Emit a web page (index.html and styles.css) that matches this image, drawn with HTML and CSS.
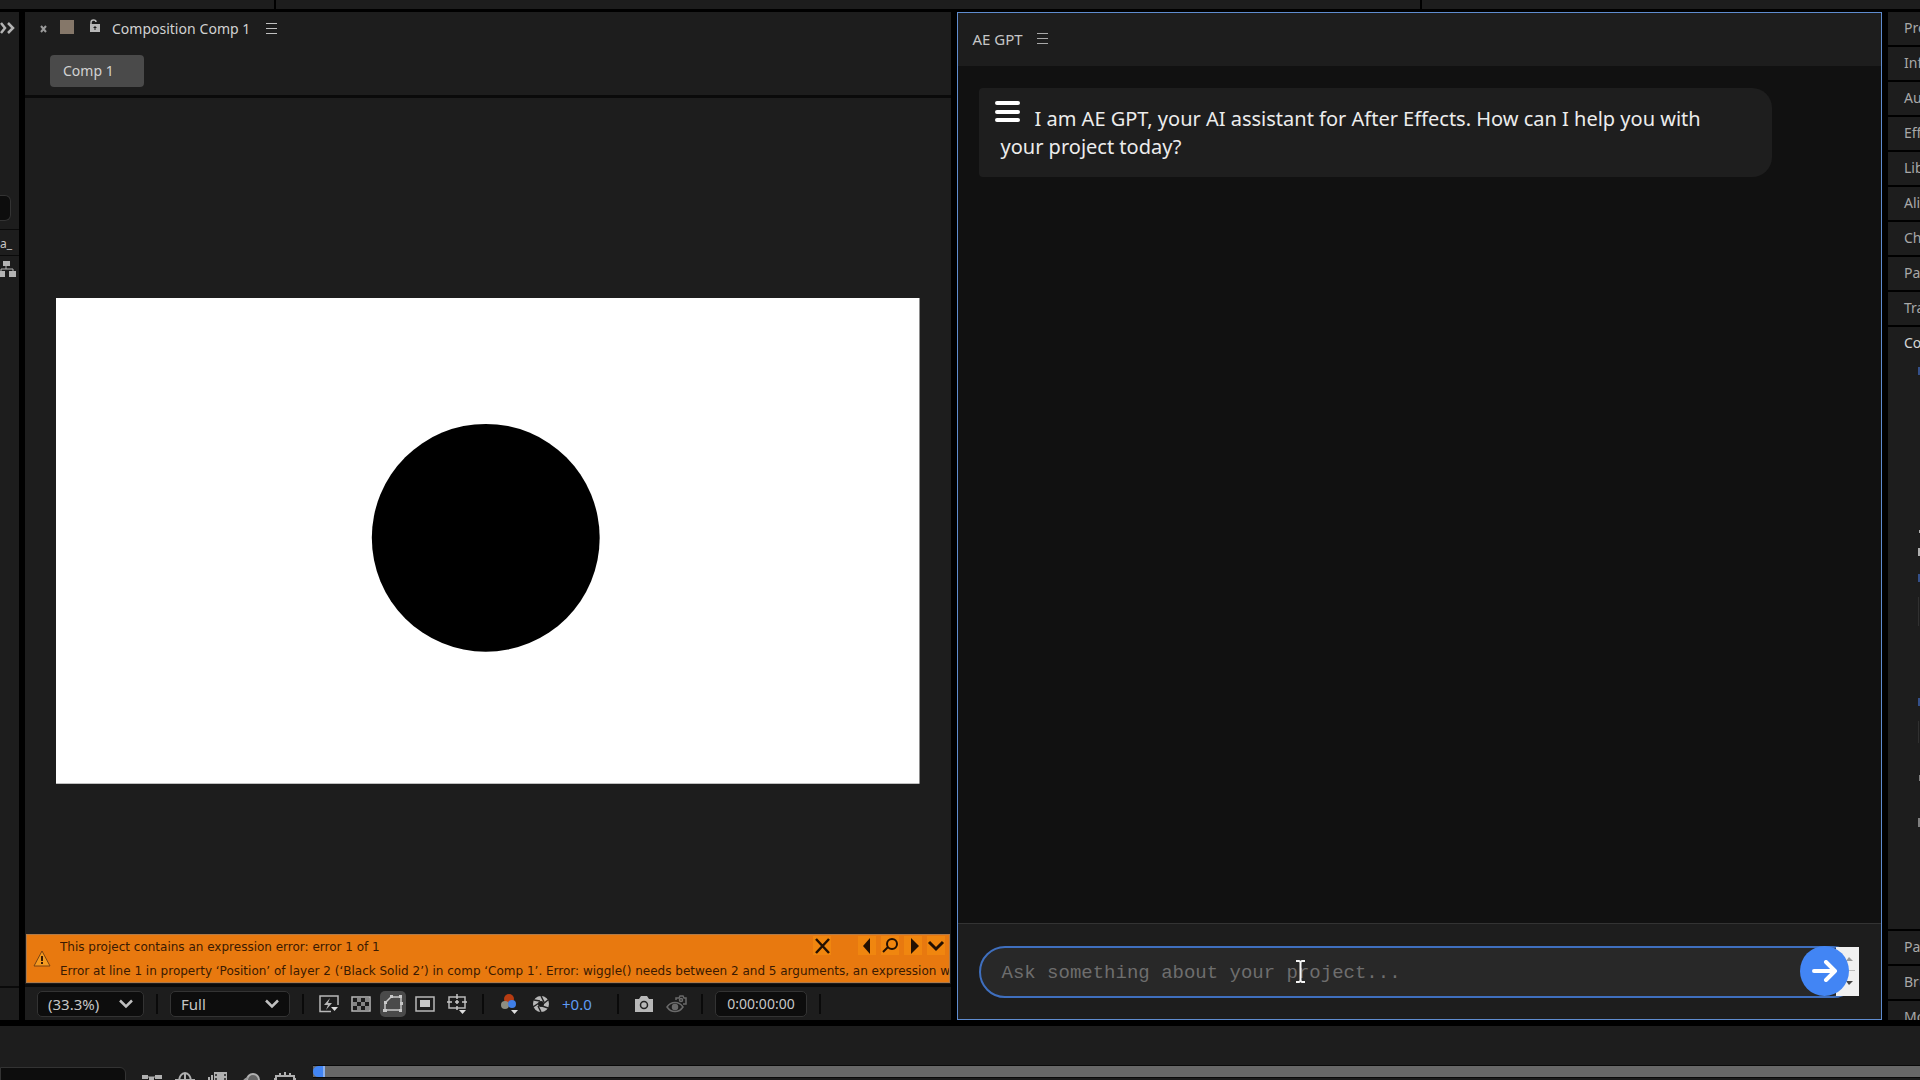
FILE: index.html
```html
<!DOCTYPE html>
<html lang="en">
<head>
<meta charset="utf-8">
<title>AE GPT</title>
<link rel="stylesheet" href="styles.css">
</head>
<body>
<div class="app">
  <header class="topbar"><span class="topbar-a"></span><span class="topbar-b"></span><span class="topbar-c"></span></header>

  <main class="workspace">
    <aside class="left">
      <button class="bare expand" aria-label="Expand panels"><svg width="15" height="12" viewBox="0 0 15 12" fill="none" stroke="#b4b4b4" stroke-width="2.500"><path d="M1 1l4 5-4 5M8 1l5 5-5 5"/></svg></button>
      <input class="left-search" aria-label="Search project">
      <div class="left-head">a_</div>
      <svg class="left-tree" width="17" height="18" viewBox="0 0 17 18" fill="#b4b4b4"><path d="M3 1h7v5H3zM0 11h5v6H0zM9 11h7v6H9z"/><path d="M6 5v4M1 11V9h12v2" fill="none" stroke="#b4b4b4"/></svg>
      <div class="left-foot"></div>
    </aside>

    <section class="comp">
      <div class="comp-head">
        <div class="comp-tab">
          <button class="bare" aria-label="Close"><svg width="7" height="8" viewBox="0 0 7 8" stroke="#999" stroke-width="2"><path d="M1 1l5 6M6 1L1 7"/></svg></button>
          <span class="swatch"></span>
          <svg class="lock" width="12" height="14" viewBox="0 0 12 14"><path d="M2 6V3.500C2 1.500 3 1 4.500 1S7 1.500 7 3" fill="none" stroke="#b8b8b8" stroke-width="1.500"/><path d="M1 5h10v8H1z" fill="#b8b8b8"/><path d="M6 7v4M4.500 8.500h3" stroke="#1d1d1d"/></svg>
          <span class="comp-title"><span>Composition</span><span>Comp 1</span></span>
          <button class="bare" aria-label="Panel menu"><svg width="11" height="11" viewBox="0 0 11 11" stroke="#c0c0c0"><path d="M0 .5h11M0 5.500h11M0 10.500h11"/></svg></button>
        </div>
        <button class="comp-chip">Comp 1</button>
      </div>
      <div class="viewer">
        <svg class="frame" viewBox="0 0 864 486"><rect width="864" height="486" fill="#fff"/><circle cx="430" cy="240" r="114"/></svg>
        <div class="error">
          <svg class="warn" width="18" height="17" viewBox="0 0 18 17"><path d="M9 1l8 15H1z" fill="#f59a20" stroke="#7a4312"/><path d="M9 6v5M9 12v2" stroke="#3a1c04" stroke-width="2"/></svg>
          <div class="error-body">
            <p>This project contains an expression error: error 1 of 1</p>
            <p>Error at line 1 in property ‘Position’ of layer 2 (‘Black Solid 2’) in comp ‘Comp 1’. Error: wiggle() needs between 2 and 5 arguments, an expression was</p>
          </div>
          <div class="error-tools">
            <button class="err-btn err-close" aria-label="Dismiss"><svg width="18" height="18" viewBox="0 0 18 18" stroke="#231002" stroke-width="2.500"><path d="M3 2l13 14M16 2L3 16"/></svg></button>
            <button class="err-btn" aria-label="Previous"><svg width="18" height="18" viewBox="0 0 18 18" fill="#231002"><path d="M12 1v16L5 9z"/></svg></button>
            <button class="err-btn" aria-label="Find"><svg width="18" height="18" viewBox="0 0 18 18" fill="none" stroke="#231002" stroke-width="2"><circle cx="11" cy="7" r="5"/><path d="M7 10l-5 5"/></svg></button>
            <button class="err-btn" aria-label="Next"><svg width="18" height="18" viewBox="0 0 18 18" fill="#231002"><path d="M7 1v16l8-8z"/></svg></button>
            <button class="err-btn" aria-label="Expand"><svg width="18" height="18" viewBox="0 0 18 18" fill="none" stroke="#231002" stroke-width="3"><path d="M2 5l7 7 7-7"/></svg></button>
          </div>
        </div>
      </div>
      <footer class="tools">
        <label class="drop drop-zoom"><select aria-label="Magnification"><option>(33.3%)</option></select><svg width="14" height="10" viewBox="0 0 14 10" fill="none" stroke="#c0c0c0" stroke-width="2.500"><path d="M1 1.500l6 6 6-6"/></svg></label>
        <i class="sep"></i>
        <label class="drop drop-res"><select aria-label="Resolution"><option>Full</option></select><svg width="14" height="10" viewBox="0 0 14 10" fill="none" stroke="#c0c0c0" stroke-width="2.500"><path d="M1 1.500l6 6 6-6"/></svg></label>
        <i class="sep"></i>
        <div class="tool-group">
          <button class="tool" aria-label="Fast previews"><svg width="20" height="18" viewBox="0 0 20 18"><path d="M12 16.500H1V1h18v9" fill="none" stroke="#b8b8b8" stroke-width="1.500"/><path d="M11 3L5 10h4l-2 5 6-7H9z" fill="#b8b8b8"/><path d="M12 12h7l-3.500 4z" fill="#ddd"/></svg></button>
          <button class="tool" aria-label="Transparency grid"><svg width="20" height="16" viewBox="0 0 20 16"><path d="M1 1h18v14H1z" fill="#1b1b1b" stroke="#b8b8b8" stroke-width="1.500"/><path d="M6 2h4v4H6zM14 2h4v4h-4zM2 6h4v4H2zM10 6h4v4h-4zM6 10h4v4H6zM14 10h4v4h-4z" fill="#858585"/></svg></button>
          <button class="tool on" aria-label="Mask visibility" aria-pressed="true"><svg width="20" height="18" viewBox="0 0 20 18"><path d="M2 15V8l6-6h10v13z" fill="none" stroke="#c8c8c8" stroke-width="1.500"/><path d="M0 14h4v3H0zM1 6h3v3H1zM7 0h3v3H7zM16 0h3v3h-3zM16 14h3v3h-3zM17 7h3v3h-3z" fill="#c8c8c8"/></svg></button>
          <button class="tool" aria-label="Region of interest"><svg width="20" height="16" viewBox="0 0 20 16"><path d="M1 1h18v14H1z" fill="none" stroke="#b8b8b8" stroke-width="1.500"/><path d="M5 4h10v7H5z" fill="#c8c8c8"/></svg></button>
          <button class="tool" aria-label="Grid and guides"><svg width="20" height="20" viewBox="0 0 20 20"><path d="M2 3h16v11H2z" fill="none" stroke="#b8b8b8" stroke-width="1.500"/><path d="M10 0v5M10 6v4M10 12v4M0 8h5M8 8h4M15 8h5" stroke="#c8c8c8" stroke-width="1.500"/><path d="M12 16h7l-3.500 4z" fill="#ddd"/></svg></button>
        </div>
        <i class="sep"></i>
        <div class="tool-group">
          <button class="tool" aria-label="Channels"><svg width="20" height="20" viewBox="0 0 20 20"><circle cx="10" cy="5" r="5" fill="#b63c12"/><circle cx="6" cy="11" r="4" fill="#8d8d82"/><circle cx="13" cy="10" r="4" fill="#3f7fe8"/><path d="M12 16h7l-3.500 4z" fill="#ddd"/></svg></button>
          <button class="tool" aria-label="Reset exposure"><svg width="18" height="18" viewBox="0 0 18 18"><circle cx="9" cy="9" r="5.500" fill="none" stroke="#b8b8b8" stroke-width="5"/><path d="M9 1l3 6M16 5l-5 4M16 13l-6-2M9 17l-3-6M1 12l6-4M2 5l6 1" stroke="#222" stroke-width="1.500"/></svg></button>
          <button class="bare exposure">+0.0</button>
        </div>
        <i class="sep"></i>
        <div class="tool-group">
          <button class="tool" aria-label="Take snapshot"><svg width="20" height="16" viewBox="0 0 20 16"><path d="M1 3h4l2-3h6l2 3h4v13H1z" fill="#b8b8b8"/><circle cx="10" cy="9" r="3.500" fill="#b8b8b8" stroke="#222" stroke-width="1.500"/></svg></button>
          <button class="tool" aria-label="Show snapshot"><svg width="21" height="18" viewBox="0 0 21 18" fill="none" stroke="#6a6a6a" stroke-width="1.500"><path d="M1 12c4-6 12-6 16 0-4 6-12 6-16 0z"/><circle cx="9" cy="12" r="2.500" fill="#6a6a6a"/><path d="M10 5V3h3l1-2h3l1 2h2v6h-3"/><circle cx="15" cy="5" r="1.500"/></svg></button>
        </div>
        <i class="sep"></i>
        <button class="time">0:00:00:00</button>
        <i class="sep"></i>
      </footer>
    </section>

    <section class="gpt">
      <div class="gpt-head"><span>AE GPT</span><button class="bare" aria-label="Panel menu"><svg width="11" height="11" viewBox="0 0 11 11" stroke="#a8a8a8"><path d="M0 .5h11M0 5.500h11M0 10.500h11"/></svg></button></div>
      <div class="chat">
        <button class="chat-menu" aria-label="Open menu"><svg width="25" height="22" viewBox="0 0 25 22" stroke="#fff" stroke-width="4" stroke-linecap="round"><path d="M2 2h21M2 11h21M2 19h21"/></svg></button>
        <p class="bubble">I am AE GPT, your AI assistant for After Effects. How can I help you with your project today?</p>
      </div>
      <form class="ask">
        <textarea class="ask-text" rows="1" aria-label="Message" placeholder="Ask something about your project..."></textarea>
        <div class="scroller"><svg width="10" height="30" viewBox="0 0 10 30"><path d="M1 5l3-4 4 4z" fill="#999"/><path d="M3 14.500h7" stroke="#bbb"/><path d="M1 25h7l-4 4z" fill="#444"/></svg></div>
        <button type="button" class="send" aria-label="Send"><svg width="26" height="22" viewBox="0 0 26 22" fill="none" stroke="#fff" stroke-width="4" stroke-linecap="round" stroke-linejoin="round"><path d="M2 11h21M14 2l9 9-9 9"/></svg></button>
        <svg class="ibeam" width="11" height="23" viewBox="0 0 11 23" fill="none" stroke="#f4f4f4" stroke-width="2"><path d="M1 1h3l1.500 1L7 1h3M5.500 2v19M1 22h3l1.500-1L7 22h3"/></svg>
      </form>
    </section>

    <aside class="right">
      <div class="row">Properties</div>
      <div class="row">Info</div>
      <div class="row">Audio</div>
      <div class="row">Effects</div>
      <div class="row">Libraries</div>
      <div class="row">Align</div>
      <div class="row">Character</div>
      <div class="row">Paragraph</div>
      <div class="row">Tracker</div>
      <div class="fill">
        <div>Content</div>
        <svg class="fill-edge" width="2" height="480" viewBox="0 0 2 480"><path d="M0 11h2v8H0zM0 218h2v8H0zM0 342h2v8H0z" fill="#34508a"/><path d="M1 174h1v3H1zM0 192h2v8H0z" fill="#b0b0b0"/><path d="M0 241h1v29H0zM0 365h1v22H0z" fill="#303030"/><path d="M1 419h1v6H1zM0 462h2v9H0z" fill="#808080"/></svg>
      </div>
      <div class="row">Paint</div>
      <div class="row">Brushes</div>
      <div class="row">Motion</div>
    </aside>
  </main>

  <footer class="timeline">
    <input class="tl-search" aria-label="Search layers">
    <div class="tl-icons">
      <svg width="20" height="14" viewBox="0 0 20 14" fill="#b0b0b0"><path d="M0 3h6v4H0zM13 3h7v4h-7zM7 5h5v8H7z"/><path d="M5 5h10" stroke="#b0b0b0"/></svg>
      <svg width="20" height="14" viewBox="0 0 20 14" fill="none" stroke="#b0b0b0" stroke-width="2"><path d="M4 10c0-12 12-12 12 0M0 8h20M10 1v12"/></svg>
      <svg width="20" height="14" viewBox="0 0 20 14"><path d="M6 0h13v14H6z" fill="#b0b0b0"/><path d="M1 5v9M4 3v11" stroke="#b0b0b0" stroke-width="2"/><path d="M8 2v10M17 2v10" stroke="#222" stroke-width="1.500" stroke-dasharray="2 2"/></svg>
      <svg width="20" height="14" viewBox="0 0 20 14"><circle cx="12" cy="8" r="6" fill="#666" stroke="#b0b0b0" stroke-width="2"/><path d="M2 12c0-4 2-5 5-6" stroke="#999" stroke-width="2" fill="none"/></svg>
      <svg width="22" height="16" viewBox="0 0 22 16" fill="none" stroke="#b0b0b0" stroke-width="2"><path d="M2 16V4h18v12M6 1v3M11 0v4M16 1v3M0 7h2M20 7h2M6 9l5 5"/></svg>
    </div>
    <div class="tl-bar"><span class="tl-head"></span></div>
  </footer>
</div>
</body>
</html>
```
FILE: styles.css
```css
* { box-sizing: border-box; }
body {
  margin: 0;
  background: #000;
  color: #c6c6c6;
  font: 15px/20px "Noto Sans", "Open Sans", sans-serif;
}
button, input, select, textarea { font: inherit; color: inherit; margin: 0; }
button { padding: 0; border: 0; }
svg { display: block; flex: none; }
p { margin: 0; }
.bare { background: none; }

.app {
  height: 100vh;
  display: grid;
  grid-template-rows: 9px minmax(0, 1fr) 54px;
  overflow: hidden;
}
.topbar { display: flex; gap: 2px; }
.topbar span { background: #1d1d1d; }
.topbar-a { flex: 274; }
.topbar-b { flex: 1144; }
.topbar-c { flex: 498; }

.workspace {
  display: grid;
  grid-template-columns: 19px minmax(0, 1fr) minmax(0, 1fr) 32px;
  gap: 6px;
  padding: 3px 0 6px;
  min-height: 0;
}

/* left panel edge */
.left {
  display: flex;
  flex-direction: column;
  background: #1d1d1d;
  overflow: hidden;
}
.expand { margin-top: 9px; height: 14px; }
.left-search {
  width: 11px;
  height: 26px;
  margin: 160px 0 8px;
  padding: 0;
  border: 1px solid #333;
  border-left: 0;
  border-radius: 0 6px 6px 0;
  background: #0d0d0d;
}
.left-head {
  height: 27px;
  border: solid #0a0a0a;
  border-width: 1px 0;
  padding-top: 4px;
  font-size: 12px;
}
.left-tree { margin: 4px 0 0; }
.left-foot { margin-top: auto; height: 34px; border-top: 2px solid #0a0a0a; }

/* composition panel */
.comp {
  display: flex;
  flex-direction: column;
  background: #1d1d1d;
  min-height: 0;
}
.comp-head { height: 86px; border-bottom: 3px solid #0a0a0a; }
.comp-tab { display: flex; align-items: center; height: 33px; padding: 0 15px; }
.swatch { width: 14px; height: 14px; margin: 0 15px 4px 13px; background: #857769; }
.lock { margin: 0 11px 6px 0; }
.comp-title { display: flex; gap: 4px; margin-right: 16px; }
.comp-tab, .comp-chip { font-size: 14px; color: #d2d2d2; }
.comp-chip {
  display: block;
  width: 94px;
  height: 32px;
  margin: 10px 25px 0;
  padding: 0 13px;
  border-radius: 4px;
  background: #4a4a4a;
  text-align: left;
}
.viewer {
  position: relative;
  flex: 1;
  min-height: 0;
  display: grid;
  place-items: center;
  padding: 0 31px;
}
.frame { width: 100%; max-height: 100%; }
.error {
  position: absolute;
  left: 1px;
  right: 1px;
  bottom: 1px;
  height: 49px;
  display: flex;
  align-items: center;
  border: 1px solid #b07a48;
  background: #e8790f;
  color: #3a1a02;
  font: 12px/24px "DejaVu Sans", sans-serif;
  overflow: hidden;
}
.warn { margin: 0 9px 0 6px; }
.error-body { flex: 1; min-width: 0; overflow: hidden; white-space: nowrap; }
.error-tools { position: absolute; top: 1px; right: 4px; display: flex; gap: 5px; }
.err-btn { background: #f0860f; height: 19px; }
.err-close { margin-right: 22px; }

.tools {
  display: flex;
  align-items: center;
  gap: 12px;
  height: 36px;
  padding: 1px 12px 0;
  border-top: 3px solid #0a0a0a;
  overflow: hidden;
}
.sep { width: 2px; height: 20px; background: #0a0a0a; }
.drop { display: grid; align-items: center; }
.drop > * { grid-area: 1 / 1; }
.drop svg { justify-self: end; margin-right: 11px; pointer-events: none; }
.drop select {
  appearance: none;
  width: 100%;
  height: 26px;
  padding: 0 10px;
  border: 1px solid #333;
  border-radius: 5px;
  background: #0d0d0d;
}
.drop-zoom { width: 107px; }
.drop-res { width: 120px; }
.tool-group { display: flex; align-items: center; gap: 6px; }
.tool {
  width: 26px;
  height: 26px;
  display: grid;
  place-items: center;
  background: none;
  border-radius: 5px;
}
.tool.on { background: #4a4a4a; }
.exposure { width: 45px; padding-left: 2px; text-align: left; color: #5f9bf5; }
.time {
  width: 92px;
  height: 26px;
  border: 1px solid #333;
  border-radius: 5px;
  background: #0d0d0d;
  font-size: 14px;
}

/* assistant panel */
.gpt {
  display: flex;
  flex-direction: column;
  border: 1px solid #5f8ccf;
  background: #111;
  min-height: 0;
}
.gpt-head {
  display: flex;
  align-items: center;
  gap: 14px;
  height: 53px;
  padding: 0 15px 2px;
  background: #1d1d1d;
}
.chat { position: relative; flex: 1; padding: 22px 21px; }
.bubble {
  width: 90%;
  padding: 17px 40px 16px 22px;
  border-radius: 4px 20px 20px 4px;
  background: #1e1e1e;
  color: #ececec;
  font-size: 20px;
  line-height: 28px;
  text-indent: 34px;
}
.chat-menu {
  position: absolute;
  left: 21px;
  top: 22px;
  width: 56px;
  height: 48px;
  padding: 0 0 0 16px;
  border-radius: 5px;
  background: none;
}
.ask {
  position: relative;
  display: flex;
  padding: 22px 22px 21px 21px;
  border-top: 1px solid #333;
  background: #1d1d1d;
}
.ask-text {
  flex: 1;
  height: 52px;
  padding: 13px 21px;
  border: 2px solid #3f6fbe;
  border-radius: 26px;
  outline: 0;
  background: #282828;
  font: 19px/24px "Liberation Mono", monospace;
  resize: none;
  overflow: hidden;
}
.ask-text::placeholder { color: #6e6e6e; opacity: 1; }
.scroller {
  position: absolute;
  right: 22px;
  top: 23px;
  width: 23px;
  height: 49px;
  padding: 9px 0 0 9px;
  background: #f0f0f0;
}
.send {
  position: absolute;
  right: 32px;
  top: 22px;
  width: 49px;
  height: 50px;
  display: grid;
  place-items: center;
  border-radius: 50%;
  background: #4285f4;
}
.ibeam { position: absolute; left: 337px; top: 36px; }

/* collapsed panel stack */
.right {
  display: flex;
  flex-direction: column;
  gap: 2px;
  overflow: hidden;
  color: #a8a8a8;
  font-size: 14px;
}
.row, .fill { padding: 6px 0 0 16px; background: #1d1d1d; white-space: nowrap; }
.row { flex: none; height: 33px; }
.fill { flex: 1; min-height: 0; overflow: hidden; color: #d6d6d6; }
.fill-edge { margin: 3px 0 0 14px; }
.row:last-child { height: 19px; }

/* timeline */
.timeline {
  display: grid;
  grid-template-columns: 126px 187px minmax(0, 1fr);
  background: #1d1d1d;
  overflow: hidden;
}
.tl-search {
  height: 30px;
  margin-top: 41px;
  border: 1px solid #333;
  border-radius: 0 6px 0 0;
  background: #0d0d0d;
}
.tl-icons { display: flex; gap: 13px; padding: 46px 0 0 16px; }
.tl-bar {
  height: 13px;
  margin-top: 39px;
  border: solid #0a0a0a;
  border-width: 1px 0;
  background: #686868;
}
.tl-head {
  display: block;
  width: 12px;
  height: 11px;
  border-radius: 6px 0 0 6px;
  border-right: 2px solid #8ab0ee;
  background: #4285f4;
}
```
